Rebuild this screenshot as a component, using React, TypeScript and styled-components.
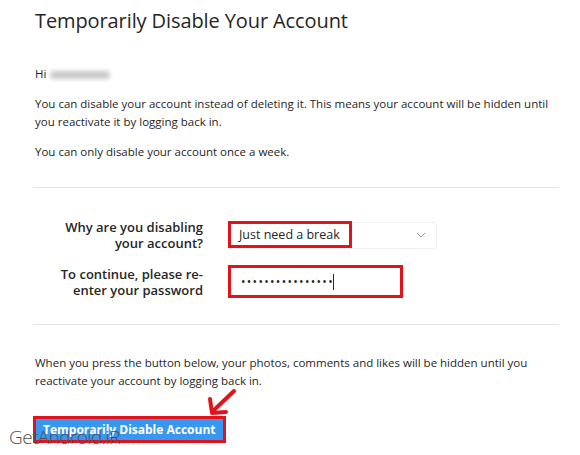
import React from "react";
import styled, { createGlobalStyle } from "styled-components";

const Global = createGlobalStyle`
  html, body { margin: 0; padding: 0; background: #fff; }
  body { font-family: "Open Sans", "Noto Sans", sans-serif; color: #262626; }
`;

const Page = styled.div`
  position: relative;
  width: 580px;
  height: 455px;
  overflow: hidden;
  padding: 0 23px 0 35px;
  box-sizing: border-box;
`;

const Title = styled.h2`
  margin: 0;
  padding-top: 8px;
  font-size: 20px;
  line-height: 26px;
  font-weight: 400;
  letter-spacing: -0.1px;
  color: #262626;
`;

const Text = styled.p<{ $top: number }>`
  margin: ${(p) => p.$top}px 0 0;
  font-size: 11.5px;
  line-height: 18px;
  color: #262626;
`;

const Blur = styled.span`
  display: inline-block;
  width: 60px;
  height: 8px;
  margin-left: 4px;
  vertical-align: middle;
  background: #c9c9c9;
  filter: blur(2px);
  border-radius: 4px;
`;

const Divider = styled.hr<{ $top: number }>`
  margin: ${(p) => p.$top}px -2px 0;
  border: 0;
  border-top: 1px solid #e6e6e6;
`;

const Form = styled.div`
  display: grid;
  grid-template-columns: 168px 1fr;
  column-gap: 25px;
  row-gap: 14px;
  align-items: center;
  margin-top: 31px;
`;

const Label = styled.label`
  text-align: right;
  font-size: 13px;
  line-height: 16px;
  font-weight: 600;
  color: #262626;
`;

const Select = styled.div`
  width: 209px;
  height: 27px;
  box-sizing: border-box;
  border: 1px solid #efefef;
  border-radius: 3px;
  display: flex;
  align-items: center;
  justify-content: space-between;
  padding-right: 10px;
`;

const Marked = styled.span`
  display: inline-flex;
  align-items: center;
  height: 27px;
  box-sizing: border-box;
  margin: -1px 0 0 -1px;
  padding: 0 9px 0 8px;
  border: 3px solid #e1141d;
  font-size: 12.5px;
  color: #262626;
`;

const Password = styled.div`
  width: 175px;
  height: 33px;
  box-sizing: border-box;
  border: 3px solid #e1141d;
  display: flex;
  align-items: center;
  padding-left: 10px;
  font-size: 12px;
  letter-spacing: 1.3px;
  color: #262626;
`;

const Caret = styled.span`
  display: inline-block;
  width: 1px;
  height: 16px;
  margin-left: -1px;
  background: #262626;
`;

const ButtonFrame = styled.div`
  display: inline-block;
  margin: 26px 0 0 -2px;
  border: 3px solid #e1141d;
`;

const Button = styled.button`
  display: block;
  height: 21px;
  padding: 0 7px;
  border: 0;
  background: #3897f0;
  color: #fff;
  font-family: "Open Sans", "Noto Sans", sans-serif;
  font-weight: 700;
  font-size: 12px;
`;

const Arrow = styled.svg`
  position: absolute;
  left: 204px;
  top: 388px;
`;

const Watermark = styled.div`
  position: absolute;
  left: 9px;
  top: 424px;
  font-family: "Open Sans", sans-serif;
  font-weight: 300;
  font-size: 19px;
  letter-spacing: -0.6px;
  color: #505050;
`;

export default function App() {
  return (
    <>
      <Global />
      <Page>
        <Title>Temporarily Disable Your Account</Title>
        <Text $top={31}>
          Hi<Blur />
        </Text>
        <Text $top={12}>
          You can disable your account instead of deleting it. This means your account will be hidden until
          you reactivate it by logging back in.
        </Text>
        <Text $top={12}>You can only disable your account once a week.</Text>
        <Divider $top={26} />
        <Form>
          <Label>
            Why are you disabling
            <br />
            your account?
          </Label>
          <Select>
            <Marked>Just need a break</Marked>
            <svg width="10" height="6" viewBox="0 0 10 6">
              <path d="M1 1l4 4 4-4" fill="none" stroke="#9a9a9a" strokeWidth="1" />
            </svg>
          </Select>
          <Label>
            To continue, please re-
            <br />
            enter your password
          </Label>
          <Password>
            ••••••••••••••••
            <Caret />
          </Password>
        </Form>
        <Divider $top={26} />
        <Text $top={29}>
          When you press the button below, your photos, comments and likes will be hidden until you
          reactivate your account by logging back in.
        </Text>
        <ButtonFrame>
          <Button>Temporarily Disable Account</Button>
        </ButtonFrame>
        <Arrow width="36" height="30" viewBox="0 0 36 30">
          <path d="M30 3L9 23" stroke="#e1141d" strokeWidth="4" strokeLinecap="round" fill="none" />
          <path d="M6 11L8 25L22 24" stroke="#e1141d" strokeWidth="4" strokeLinecap="round" strokeLinejoin="round" fill="none" />
        </Arrow>
        <Watermark>GetAndroid.iR</Watermark>
      </Page>
    </>
  );
}
